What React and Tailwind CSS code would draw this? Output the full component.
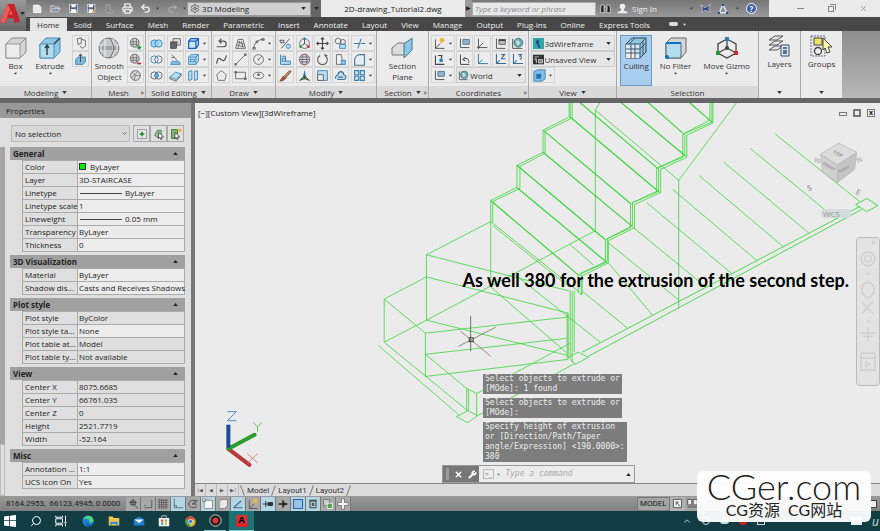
import { ChevronDown, X, Wrench, Search, Printer, Undo2, Redo2, Settings } from "lucide-react";

// 16x16 drawings for the ribbon, the toolbars and the status bar
const ICONS = {
  file: <path d="M2 3h8l3 3v8H2z" fill="#e9e9e9" stroke="#fff" />,
  open: <path d="M1 13V4h5l1 2h6v2M1 13l3-5h11l-3 5z" fill="#8b949c" stroke="#ddd" />,
  save: (
    <>
      <rect x="2" y="2" width="12" height="12" fill="#52657e" stroke="#dfe5ee" />
      <path d="M5 2h6v4H5zM4 9h8v5H4z" fill="#fff" />
    </>
  ),
  saveAs: (
    <>
      <rect x="2" y="2" width="11" height="12" fill="#52657e" stroke="#dfe5ee" />
      <path d="M4 2h6v4H4zM4 9h6v5H4z" fill="#fff" />
      <path d="M8 14l6-7 1 1-5 7z" fill="#e8a83a" />
    </>
  ),
  plotView: <path d="M3 2h6v12H3zM9 8l5 6H5" fill="#888" stroke="#aaa" />,
  polysolid: <path d="M4 2l5-1v7l-4 1zM9 3l5 1v7l-3 3-4-3" fill="#eee" stroke="#555" />,
  presspull: (
    <>
      <path d="M2 8l3-3h9v6l-3 3H2z" fill="#7cb9dd" stroke="#3a7eab" />
      <path d="M8 11V2M6 4l2-3 2 3" fill="none" stroke="#333" />
    </>
  ),
  meshMore: (
    <>
      <circle cx="7" cy="7" r="5.5" fill="#ddd" stroke="#555" />
      <path d="M2 6h10M2 9h10M5 2v10M9 2v10" fill="none" stroke="#666" />
      <path d="M10 13h5M12.5 10.500v5" stroke="#1e9e36" strokeWidth="2" />
    </>
  ),
  meshLess: (
    <>
      <circle cx="7" cy="7" r="5.500" fill="#ddd" stroke="#555" />
      <path d="M2 6h10M2 9h10M5 2v10M9 2v10" fill="none" stroke="#666" />
      <path d="M10 13h5" stroke="#cc2b2b" strokeWidth="2" />
    </>
  ),
  meshRefine: (
    <>
      <circle cx="8" cy="8" r="6" fill="#ddd" stroke="#555" />
      <path d="M4 3c1 4 5 6 10 5M3 11l8-8M6 14l2-6" fill="none" stroke="#666" />
    </>
  ),
  union: (
    <>
      <circle cx="5.500" cy="8" r="4.500" fill="#9ed0f0" stroke="#2f7cb3" />
      <circle cx="10.500" cy="8" r="4.500" fill="#9ed0f0" fillOpacity=".7" stroke="#2f7cb3" />
    </>
  ),
  subtract: (
    <>
      <circle cx="10.500" cy="8" r="4.500" fill="#eee" stroke="#555" />
      <circle cx="5.500" cy="8" r="4.500" fill="none" stroke="#2f7cb3" />
    </>
  ),
  intersect: (
    <>
      <circle cx="5.500" cy="8" r="4.500" fill="none" stroke="#555" />
      <circle cx="10.500" cy="8" r="4.500" fill="none" stroke="#555" />
      <path d="M8 4.500c3 2 3 5 0 7c-3-2-3-5 0-7z" fill="#5fb0e2" stroke="#2f7cb3" />
    </>
  ),
  slab: (
    <>
      <path d="M5 2h9v8H5z" fill="#ddd" stroke="#555" />
      <path d="M2 6h8l-1 8H2z" fill="#666" stroke="#444" />
    </>
  ),
  slice: (
    <>
      <path d="M2 14l2-4 9 1 1 3z" fill="#8cc6e8" stroke="#3a7eab" />
      <path d="M3 2l8 8M3 6l4-1" fill="none" stroke="#555" />
    </>
  ),
  thicken: (
    <>
      <path d="M1 10l7-6 7 2-6 7z" fill="#b8ddf2" stroke="#2f7cb3" />
      <path d="M1 10v2l8 3 6-7V6" fill="none" stroke="#555" />
    </>
  ),
  cubeBlue: <path d="M2 5l3-3h9v8l-3 4H2zM2 5h9v9M11 5l3-3" fill="#cfe6f8" stroke="#0f5fc0" strokeWidth="1.500" />,
  cubeLight: <path d="M2 5l3-3h9v8l-3 4H2zM2 5h9v9M11 5l3-3M4 8h5v3H4z" fill="#b8ddf2" stroke="#2f7cb3" />,
  separate: <path d="M2 3l4-1v11l-4 1zM9 3l4-1v11l-4 1z" fill="#b8ddf2" stroke="#2f7cb3" />,
  polyline: <path d="M2 12h8c5 0 5-7 0-7H6M8 2L5 5l3 3" fill="none" stroke="#555" strokeWidth="1.500" />,
  helix: <path d="M2 14L5 3h6l3 11zM4 10l8 2M5 6l7 3M5 13l2-8M11 13L9 5" fill="none" stroke="#555" />,
  arc: <path d="M2 14C3 7 7 3 14 3M1 13h3v2H1zM12 2h3v2h-3zM5 5h2v2H5z" fill="none" stroke="#555" />,
  spline: <path d="M2 13C5-4 10 20 14 3" fill="none" stroke="#555" strokeWidth="1.500" />,
  line: <path d="M2 14L14 2M1 13h2v2H1zM13 1h2v2h-2z" fill="none" stroke="#555" />,
  circle: (
    <>
      <circle cx="8" cy="8" r="6" fill="none" stroke="#555" />
      <path d="M7 8h2M8 7v2M9 7l3-3" stroke="#555" />
    </>
  ),
  polygon: <path d="M8 2l6 5-2 7H4L2 7z" fill="none" stroke="#777" strokeWidth="1.200" />,
  rect: <path d="M2 4h12v8H2zM1 3h2v2H1zM13 11h2v2h-2z" fill="none" stroke="#555" />,
  ellipse: (
    <>
      <ellipse cx="8" cy="8" rx="6.500" ry="4" fill="none" stroke="#555" />
      <circle cx="8" cy="7" r="1.500" fill="#555" />
    </>
  ),
  scaleOff: (
    <>
      <path d="M3 14L13 2M1 4h5v3H2z" fill="none" stroke="#555" strokeWidth="1.200" />
      <rect x="9" y="9" width="5" height="5" rx="2" fill="#b8ddf2" stroke="#2f7cb3" />
    </>
  ),
  align: <path d="M2 2v12h12v-4H8V4H4M4 7h4v3H4z" fill="#b8ddf2" stroke="#3a7eab" strokeWidth="1.200" />,
  brush: (
    <>
      <path d="M7 8l6-6 2 1-6 7z" fill="#c98a62" stroke="#6a4a38" />
      <path d="M1 15l4-6 4 2-4 3z" fill="#b5522f" stroke="#6a4a38" />
    </>
  ),
  gizmo: (
    <>
      <circle cx="8" cy="8" r="6" fill="none" stroke="#555" />
      <path d="M8 8V1M8 8l-5 4M8 8l5 4" stroke="#333" />
      <circle cx="3" cy="12" r="1.500" fill="#1e9e36" />
      <circle cx="13" cy="12" r="1.500" fill="#cc2b2b" />
      <circle cx="8" cy="2" r="1.500" fill="#2f7cb3" />
    </>
  ),
  globe: (
    <>
      <circle cx="8" cy="8" r="6.500" fill="#cfe0ea" stroke="#555" />
      <ellipse cx="8" cy="8" rx="3" ry="6.500" fill="none" stroke="#b44" />
      <path d="M2 8h12M3 5h10M3 11h10" stroke="#555" />
    </>
  ),
  tripod: (
    <>
      <path d="M8 1L6 10h4z" fill="#2f7cb3" />
      <path d="M8 8v4L2 14zM8 8v4l6 2z" fill="#49a05a" stroke="#444" />
    </>
  ),
  move: <path d="M8 1v14M1 8h14M6 3l2-2 2 2M6 13l2 2 2-2M3 6L1 8l2 2M13 6l2 2-2 2" fill="none" stroke="#444" strokeWidth="1.300" />,
  rotate: <path d="M11 3a6 6 0 1 1-6 0M11 3V1M11 3h3" fill="none" stroke="#555" strokeWidth="1.300" />,
  scale: (
    <>
      <path d="M2 2h12v12H2z" fill="#b8ddf2" stroke="#2f7cb3" />
      <path d="M2 7h7v7H2z" fill="#eee" stroke="#555" />
    </>
  ),
  copy: (
    <>
      <circle cx="5" cy="5" r="3.500" fill="#eee" stroke="#555" />
      <circle cx="11" cy="6" r="3" fill="none" stroke="#555" />
      <path d="M7 9h7v5H7z" fill="#b8ddf2" stroke="#2f7cb3" />
    </>
  ),
  mirror: (
    <>
      <path d="M3 2h6l2 12H3z" fill="#eee" stroke="#555" />
      <path d="M9 9h5v5H9z" fill="#8cc6e8" stroke="#2f7cb3" />
    </>
  ),
  offset: <path d="M2 12a4 4 0 0 1 3-5c0-5 7-5 7 0c4 1 3 6 0 6H4M5 10h6" fill="#b8ddf2" stroke="#45718d" strokeWidth="1.300" />,
  trim: <path d="M1 8h5M10 8h5M10 2L6 14M6 8h3" fill="none" stroke="#3a7eab" strokeWidth="1.300" />,
  fillet: <path d="M2 15V9c0-4 3-7 7-7h5v13z" fill="#e4eef4" stroke="#45718d" strokeWidth="1.300" />,
  array: <path d="M2 2h5v5H2zM9 2h5v5H9zM2 9h5v5H2zM9 9h5v5H9z" fill="#cfe6f4" stroke="#3a7eab" strokeWidth="1.300" />,
  ucs: <path d="M3 2v11h11M3 13l6-6M1 13h4M3 11v4" fill="none" stroke="#555" strokeWidth="1.200" />,
  ucsSun: (
    <>
      <path d="M3 3v11h11M3 14l6-6" fill="none" stroke="#555" strokeWidth="1.200" />
      <circle cx="11" cy="4" r="3" fill="#f0b840" />
    </>
  ),
  ucsTurn: (
    <>
      <path d="M3 3v11h11M6 3h5l-1 4" fill="none" stroke="#444" strokeWidth="1.300" />
      <rect x="8" y="7" width="4" height="4" fill="#2f7cb3" />
    </>
  ),
  ucsFace: (
    <>
      <path d="M3 2v11h11" fill="none" stroke="#555" strokeWidth="1.200" />
      <path d="M6 3h8v6H6z" fill="#8fb4cf" stroke="#45718d" />
    </>
  ),
  ucsObject: (
    <>
      <path d="M3 2v12h11" fill="none" stroke="#555" strokeWidth="1.200" />
      <path d="M6 3h8v6H6z" fill="#bbb" stroke="#555" />
      <path d="M6 4h8" stroke="#444" strokeWidth="2" />
    </>
  ),
  ucsPrev: <path d="M3 2v12h11M6 8l3-3M6 8l3 2M6 8c6-3 8 0 7 4" fill="none" stroke="#444" strokeWidth="1.200" />,
  ucsOrigin: <path d="M3 1v12h12M3 13l5-5" fill="none" stroke="#3a7eab" strokeWidth="1.200" />,
  ucsZ: <path d="M3 1v12h12M3 13l4-4M9 2h4L9 7h5" fill="none" stroke="#3a6b94" strokeWidth="1.300" />,
  ucsThree: <path d="M3 1v12h12M3 13l4-4M9 2h4L11 4q4 1 0 4" fill="none" stroke="#3a6b94" strokeWidth="1.300" />,
  world: (
    <>
      <path d="M2 2v12h12" fill="none" stroke="#555" strokeWidth="1.200" />
      <circle cx="9" cy="7" r="5.500" fill="#6ba9b4" stroke="#3d7080" />
      <path d="M6 4l4 1 1 3-3 3z" fill="#cfe6d6" />
    </>
  ),
  wireframe: (
    <>
      <rect width="16" height="16" fill="#2fa8a8" />
      <path d="M6 2l3 2-1 4 3 6H8L6 9 4 7z" fill="#23438f" />
    </>
  ),
  namedView: (
    <>
      <rect width="16" height="14" y="1" fill="#333" />
      <path d="M2 4h7M2 7h3v6M8 8h6v5H8z" stroke="#ddd" fill="#888" />
    </>
  ),
  viewCfg: (
    <>
      <path d="M1 3l5-2h9v11l-4 3H1z" fill="#7fc0ea" stroke="#44749a" />
      <path d="M4 6h6v6H4z" fill="#2a73b5" />
    </>
  ),
  quickAdd: (
    <>
      <path d="M2 2h12v12H2z" fill="#dfe9df" stroke="#888" />
      <path d="M8 5v6M5 8h6" stroke="#1a8a2a" strokeWidth="2" />
    </>
  ),
  pick: (
    <>
      <path d="M2 10l4-7h5v6l-4 4z" fill="#8fbf8f" stroke="#477147" />
      <path d="M8 6l6 6-3 0 1 3-2 0-1-3-2 2z" fill="#fff" stroke="#333" />
    </>
  ),
  quickSelect: (
    <>
      <path d="M2 2h8v12H2z" fill="#7eb56f" stroke="#37612d" />
      <path d="M7 6l6 6h-3l1 3H9l-1-3-2 2z" fill="#fff" stroke="#333" />
      <circle cx="13" cy="3" r="2.500" fill="#f0b840" />
    </>
  ),
  snapInfer: <path d="M8 1v10M3 6h10M5 4h6v5H5zM11 10l3 4" fill="none" stroke="#444" strokeWidth="1.200" />,
  snap: <path d="M13 3v10H3M3 10h2" fill="none" stroke="#666" strokeWidth="1.500" />,
  grid: <path d="M1 3h14M1 6h14M1 9h14M1 12h14M3 1v14M6 1v14M9 1v14M12 1v14" stroke="#555" />,
  ortho: <path d="M3 1v12h12M3 10h3v3" fill="none" stroke="#567b90" strokeWidth="1.300" />,
  polar: <path d="M13 5A6 5 0 1 0 13 11M7 8l7-5M7 8h6" fill="none" stroke="#444" strokeWidth="1.300" />,
  osnap: <path d="M3 3h11v11H3zM1 1h4v4H1z" fill="#f7f7f7" stroke="#777" />,
  osnap3: <path d="M3 5l3-3h8v8l-4 4H3z" fill="#e8e8e8" stroke="#777" />,
  otrack: <path d="M2 13h12M2 13l10-9" fill="none" stroke="#3a6f90" strokeWidth="1.500" />,
  dyn: <path d="M1 8h9M5 4v8M8 6h6v4H8z" fill="#334" stroke="#334" strokeWidth="1.300" />,
  lwt: <path d="M2 8h12M8 3v10M10 6v4" stroke="#222" strokeWidth="2" />,
  tpy: <path d="M2 2h12v12H2z" fill="#9ec3e6" stroke="#2f65a8" strokeWidth="1.500" />,
  qp: <path d="M4 4h8v9H4zM3 3h10M7 7h2v3H7z" fill="none" stroke="#333" strokeWidth="1.300" />,
  sc: (
    <>
      <path d="M2 2h8v8H2z" fill="#ccc" stroke="#666" />
      <path d="M7 7h7v7H7z" fill="#5da357" stroke="#fff" />
    </>
  ),
  am: <path d="M6 1h4v5h5v4h-5v5H6v-5H1V6h5z" fill="#f4f4f4" stroke="#666" />,
  layoutIc: <path d="M2 2h12v12H2zM6 6l6 6M6 6v4M6 6h4" fill="#eee" stroke="#444" strokeWidth="1.200" />,
  twoViews: <path d="M1 2h6v8H1zM9 2h6v8H9zM1 13h14" fill="#eee" stroke="#444" strokeWidth="1.200" />,
};

function Icon({ name, className = "size-3" }) {
  return (
    <svg viewBox="0 0 16 16" className={`shrink-0 ${className}`} aria-hidden="true">
      {ICONS[name]}
    </svg>
  );
}

function Caret({ className = "" }) {
  return (
    <svg viewBox="0 0 6 4" className={`h-[3px] w-[5px] shrink-0 ${className}`} fill="currentColor" aria-hidden="true">
      <path d="M0 0h6L3 4z" />
    </svg>
  );
}

function Tool({ name, menu }) {
  return (
    <button
      type="button"
      aria-label={name}
      className="flex h-[16px] items-center justify-center border border-[#d4d4d4] bg-[#ececec] px-px text-[#333]"
    >
      <Icon name={name} className="size-[13px]" />
      {menu ? <Caret className="ml-[2px] scale-75" /> : null}
    </button>
  );
}

function ToolColumn({ names, menu }) {
  return (
    <div className="flex flex-col">
      {names.map((name) => (
        <Tool key={name} name={name} menu={menu} />
      ))}
    </div>
  );
}

function Panel({ title, menu, launcher, className = "", children }) {
  return (
    <section className={`flex shrink-0 flex-col border-r border-[#aaa] ${className}`}>
      <div className="flex h-[55px] justify-evenly pt-[4px]">{children}</div>
      <h2 className="relative flex h-[12px] items-center justify-center gap-1 bg-[#d9d9d9] text-[#333]">
        {title}
        {menu ? <Caret /> : null}
        {launcher ? <span className="absolute right-px text-[7px]">»</span> : null}
      </h2>
    </section>
  );
}

function BigTool({ label, menu, active, children, className = "" }) {
  return (
    <button
      type="button"
      className={`flex h-[51px] flex-col items-center border leading-[11px] ${
        active ? "border-[#6a9cc8] bg-[#a9cdee]" : "border-transparent"
      } ${className}`}
    >
      <svg viewBox="0 0 24 24" className="size-[24px] shrink-0" aria-hidden="true">
        {children}
      </svg>
      <span className="whitespace-pre-line text-center">{label}</span>
      {menu ? <Caret className="mt-px scale-75" /> : null}
    </button>
  );
}

function RibbonSelect({ label, value, icon, className = "" }) {
  return (
    <label className={`relative flex h-[16px] items-center border border-[#ccc] bg-[#e6e6e6] pl-px ${className}`}>
      <Icon name={icon} className="size-[11px]" />
      <select aria-label={label} className="w-full appearance-none bg-transparent pl-px">
        <option>{value}</option>
      </select>
      <Caret className="absolute right-[3px]" />
    </label>
  );
}

function TitleBar() {
  return (
    <header className="flex h-[17px] items-center bg-linear-to-b from-[#777] to-[#999] text-[#222]">
      <div className="flex flex-1 items-center gap-[7px] pl-[6px] text-[#eee]">
        {["file", "open", "save", "saveAs", "plotView"].map((name) => (
          <button key={name} type="button" aria-label={name}>
            <Icon name={name} className="size-[11px]" />
          </button>
        ))}
        <button type="button" aria-label="Plot"><Printer className="size-[11px]" strokeWidth={3} /></button>
        <button type="button" aria-label="Undo" className="flex items-center gap-1">
          <Undo2 className="size-[11px]" strokeWidth={3} />
          <Caret className="scale-75 text-[#444]" />
        </button>
        <button type="button" aria-label="Redo" className="flex items-center gap-1 text-[#bbb]">
          <Redo2 className="size-[11px]" />
          <Caret className="scale-75 text-[#444]" />
        </button>
      </div>
      <label className="relative flex h-[14px] w-[124px] items-center border border-[#999] bg-[#d0d0d0] pl-[2px]">
        <Settings className="size-[11px] text-[#555]" />
        <select aria-label="Workspace" className="w-full appearance-none bg-transparent pl-[2px]">
          <option>3D Modeling</option>
        </select>
        <Caret className="absolute right-1" />
      </label>
      <button type="button" aria-label="Customize" className="flex h-[17px] w-[10px] items-center justify-center bg-[#666]">
        <Caret />
      </button>
      <h1 className="flex h-[17px] w-[144px] items-center justify-center bg-[#ebebeb]">2D-drawing_Tutorial2.dwg</h1>
      <span className="w-[7px] bg-[#999] text-center text-[6px] leading-[17px]">▶</span>
      <input
        aria-label="Search help"
        placeholder="Type a keyword or phrase"
        className="h-[14px] w-[124px] border border-[#aaa] bg-[#e8e8e8] px-[2px] italic placeholder:text-[#888]"
      />
      <div className="flex w-[173px] items-center gap-[6px] pl-1 text-[#eee]">
        <svg viewBox="0 0 16 16" className="size-[11px]" fill="#222" stroke="#eee">
          <path d="M2 3h4v11H1V7zM10 3h4l1 4v7h-5zM6 6h4v3H6z" />
        </svg>
        <button type="button" className="flex items-center gap-1">
          <svg viewBox="0 0 16 16" className="size-[11px]" fill="#eee">
            <circle cx="8" cy="5" r="4" />
            <path d="M6 8h4v3l5 2v2H1v-2l5-2z" />
          </svg>
          Sign In
        </button>
        <Caret className="ml-auto scale-75 text-[#444]" />
        <svg viewBox="0 0 16 16" className="size-[11px]">
          <path d="M1 3l6 4 8-5-3 6 3 6-7-4-6 4 2-6z" fill="#1f3b7a" stroke="#ccd6f0" />
        </svg>
        <svg viewBox="0 0 16 16" className="size-[12px]" fill="none" stroke="#dde6f8" strokeWidth="2">
          <path d="M8 2L3 13h10z" />
          <path d="M1 13h3M12 13h3M8 1v3" stroke="#2b4c92" strokeWidth="3" />
        </svg>
        <Caret className="scale-75 text-[#444]" />
        <button type="button" aria-label="Help" className="mr-3 size-[11px] rounded-full border border-white bg-[#3a5fa8] text-[8px] leading-[9px] font-bold text-white">
          ?
        </button>
      </div>
      <div className="flex h-[17px] w-[111px] items-center justify-around bg-[#ebebeb] pl-[16px] text-[#888]">
        <button type="button" aria-label="Minimize" className="h-px w-[7px] bg-[#888]" />
        <button type="button" aria-label="Restore" className="relative size-[6px] border border-[#888]">
          <span className="absolute -top-[3px] left-[1px] size-[6px] border-t border-r border-[#888]" />
        </button>
        <button type="button" aria-label="Close"><X className="size-[9px]" /></button>
      </div>
    </header>
  );
}

const TABS = [
  "Home", "Solid", "Surface", "Mesh", "Render", "Parametric", "Insert", "Annotate",
  "Layout", "View", "Manage", "Output", "Plug-ins", "Online", "Express Tools",
];

function RibbonTabs() {
  return (
    <nav className="flex h-[14px] items-end bg-[#474747] pl-[4px] text-[#eee]">
      {TABS.map((tab) => (
        <button
          key={tab}
          type="button"
          className={`h-[13px] px-[7px] leading-[13px] ${tab === "Home" ? "bg-[#e4e4e4] text-[#333]" : ""}`}
        >
          {tab}
        </button>
      ))}
      <span className="mb-[5px] ml-3 h-[4px] w-[9px] rounded-sm bg-[#ddd]" />
      <Caret className="mb-[5px] ml-1 scale-75" />
    </nav>
  );
}

function Ribbon() {
  return (
    <div className="flex h-[67px] overflow-hidden bg-linear-to-b from-[#8e8e8e] to-[#b8b8b8] text-[#333]">
      <div className="flex bg-[#ebebeb]">
        <Panel title="Modeling" menu className="w-[92px]">
          <BigTool label="Box" menu className="w-[26px]">
            <path d="M2 8l6-6h14v14l-6 6H2z" fill="#d4d4d4" stroke="#888" />
            <path d="M2 8h14v14H2z" fill="#ececec" stroke="#999" />
            <path d="M16 8l6-6" stroke="#888" />
          </BigTool>
          <BigTool label="Extrude" menu className="w-[38px]">
            <path d="M2 8l6-6h14v14l-6 6H2z" fill="#8fc6e2" stroke="#4d8fb3" />
            <path d="M2 8h14v14H2z" fill="#b4dcef" stroke="#4d8fb3" />
            <path d="M16 8l6-6M9 19v-9M7 12l2-3 2 3" fill="none" stroke="#345" strokeWidth="1.500" />
          </BigTool>
          <ToolColumn names={["polysolid", "presspull"]} />
        </Panel>
        <Panel title="Mesh" launcher className="w-[54px]">
          <BigTool label={"Smooth\nObject"} className="w-[32px]">
            <circle cx="12" cy="12" r="10" fill="#c8c8c8" stroke="#777" />
            <path d="M5 8h14v8H5z" fill="#9aa4ad" />
            <path d="M2 9h20M3 15h18M8 3v18M16 3v18" fill="none" stroke="#eee" />
            <path d="M12 2c6 5 6 15 0 20" fill="none" stroke="#666" />
          </BigTool>
          <ToolColumn names={["meshMore", "meshLess", "meshRefine"]} />
        </Panel>
        <Panel title="Solid Editing" menu className="w-[66px]">
          <ToolColumn names={["union", "subtract", "intersect"]} />
          <ToolColumn names={["slab", "slice", "thicken"]} />
          <ToolColumn names={["cubeBlue", "cubeLight", "separate"]} menu />
        </Panel>
        <Panel title="Draw" menu className="w-[64px]">
          <ToolColumn names={["polyline", "spline", "polygon"]} />
          <ToolColumn names={["helix", "line", "rect"]} />
          <ToolColumn names={["arc", "circle", "ellipse"]} menu />
        </Panel>
        <Panel title="Modify" menu className="w-[101px]">
          <ToolColumn names={["scaleOff", "align", "brush"]} />
          <ToolColumn names={["gizmo", "globe", "tripod"]} />
          <ToolColumn names={["move", "rotate", "scale"]} />
          <ToolColumn names={["copy", "mirror", "offset"]} />
          <ToolColumn names={["trim", "fillet", "array"]} menu />
        </Panel>
        <Panel title="Section" menu launcher className="w-[52px]">
          <BigTool label={"Section\nPlane"} className="w-[42px]">
            <path d="M1 12l6-5h10v9l-5 3H1z" fill="#ddd" stroke="#777" />
            <path d="M13 8l8-6v12l-8 8z" fill="#8cc6e8" stroke="#45718d" />
          </BigTool>
        </Panel>
        <Panel title="Coordinates" launcher className="w-[100px]">
          <ToolColumn names={["ucsSun", "ucsTurn", "ucsFace"]} menu />
          <div className="flex w-[70px] flex-col">
            <div className="flex justify-between">
              {["ucsFace", "ucs", "ucsObject", "world"].map((name) => <Tool key={name} name={name} />)}
            </div>
            <div className="flex justify-between">
              {["ucsPrev", "ucsOrigin", "ucsZ", "ucsThree"].map((name) => <Tool key={name} name={name} />)}
            </div>
            <RibbonSelect label="Named UCS" value="World" icon="world" />
          </div>
        </Panel>
        <Panel title="View" menu className="w-[88px]">
          <div className="flex w-[84px] flex-col">
            <RibbonSelect label="Visual style" value="3dWireframe" icon="wireframe" />
            <RibbonSelect label="Named view" value="Unsaved View" icon="namedView" />
            <div className="flex"><Tool name="viewCfg" menu /></div>
          </div>
        </Panel>
        <Panel title="Selection" className="w-[142px]">
          <BigTool label="Culling" active className="w-[32px]">
            <path d="M2 8l6-6h14v14l-6 6H2z" fill="#8fc6e2" stroke="#345" />
            <path d="M2 8h14v14z" fill="#cfe8f5" />
            <path d="M2 22V8l14 14z" fill="#eee" />
            <path d="M2 8h14v14M16 8l6-6M7 8v14M11 8v14M2 13h14M2 17h14M19 5v14M16 13l6-6M11 2L5 8" fill="none" stroke="#456" />
          </BigTool>
          <BigTool label="No Filter" menu className="w-[40px]">
            <path d="M2 7l5-5h15v14l-5 6H2z" fill="#d4d4d4" stroke="#666" />
            <path d="M2 7h15v15H2z" fill="#b4dcef" stroke="#567" />
            <path d="M2 7h15" stroke="#0f6fc0" strokeWidth="2" />
            <circle cx="3" cy="21" r="2" fill="#0f6fc0" />
          </BigTool>
          <BigTool label="Move Gizmo" menu className="w-[56px]">
            <path d="M12 3l9 5v9l-9 5-9-5V8zM12 3v9M12 12l9 5M12 12l-9 5" fill="none" stroke="#444" strokeWidth="1.300" />
            <rect x="10" y="1" width="4" height="4" fill="#2f7cb3" />
            <rect x="1" y="15" width="4" height="4" fill="#1e9e36" />
            <rect x="19" y="15" width="4" height="4" fill="#cc2b2b" />
            <circle cx="12" cy="12" r="2" fill="#444" />
          </BigTool>
        </Panel>
        <section className="flex w-[42px] flex-col items-center justify-between border-r border-[#aaa] pt-[2px] pb-[4px]">
          <BigTool label="Layers">
            <path d="M2 6l6-4h8l-6 4zM2 11l6-4h8l-6 4zM2 16l6-4h8l-6 4z" fill="#e8e8e8" stroke="#555" />
            <path d="M14 11h8v11h-8z" fill="#dfe8f2" stroke="#334d70" />
            <path d="M16 14h4M16 17h4M16 19h4" stroke="#334d70" strokeWidth="1.500" />
          </BigTool>
          <Caret />
        </section>
        <section className="flex w-[41px] flex-col items-center justify-between pt-[2px] pb-[4px]">
          <BigTool label="Groups">
            <rect x="2" y="2" width="14" height="20" fill="none" stroke="#668" strokeDasharray="2 1" />
            <rect x="5" y="4" width="8" height="7" fill="#f0e060" stroke="#444" />
            <circle cx="9" cy="17" r="3.500" fill="none" stroke="#444" strokeWidth="1.300" />
            <path d="M14 4l9 9h-4l2 5-3 1-2-5-2 2z" fill="#fff6b0" stroke="#444" />
          </BigTool>
          <Caret />
        </section>
      </div>
    </div>
  );
}

const GROUPS = [
  {
    title: "General",
    rows: [
      ["Color", "ByLayer", "swatch"],
      ["Layer", "3D-STAIRCASE"],
      ["Linetype", "ByLayer", "line"],
      ["Linetype scale", "1"],
      ["Lineweight", "0.05 mm", "line"],
      ["Transparency", "ByLayer"],
      ["Thickness", "0"],
    ],
  },
  {
    title: "3D Visualization",
    rows: [["Material", "ByLayer"], ["Shadow dis...", "Casts and Receives Shadows"]],
  },
  {
    title: "Plot style",
    rows: [
      ["Plot style", "ByColor", "locked"],
      ["Plot style ta...", "None"],
      ["Plot table at...", "Model", "locked"],
      ["Plot table ty...", "Not available", "locked"],
    ],
  },
  {
    title: "View",
    rows: [
      ["Center X", "8075.6685", "locked"],
      ["Center Y", "66761.035", "locked"],
      ["Center Z", "0", "locked"],
      ["Height", "2521.7719", "locked"],
      ["Width", "-52.164", "locked"],
    ],
  },
  { title: "Misc", rows: [["Annotation ...", "1:1"], ["UCS icon On", "Yes"]] },
];

function PropertyGroup({ title, rows }) {
  return (
    <section className="pb-[3px]">
      <h3 className="flex h-[13px] items-center justify-between bg-[#a0a0a0] px-[3px] font-bold text-[#222]">
        {title}
        <Caret className="mr-1 rotate-180" />
      </h3>
      <div className="pl-[12px]">
        <table className="w-full table-fixed border-collapse">
          <tbody>
            {rows.map(([name, value, kind]) => (
              <tr key={name} className="h-[13px] leading-[12px]">
                <th scope="row" className="w-[55px] border border-[#aaa] p-0 pl-[2px] text-left font-normal whitespace-nowrap">
                  {name}
                </th>
                <td className={`border border-[#aaa] p-0 pl-px whitespace-nowrap ${kind === "locked" ? "" : "bg-[#ececec]"}`}>
                  {kind === "swatch" ? <span className="mr-[4px] inline-block size-[7px] border border-[#333] bg-[#0e0]" /> : null}
                  {kind === "line" ? <span className="mr-[3px] ml-px inline-block h-px w-[42px] bg-[#444] align-middle" /> : null}
                  {value}
                </td>
              </tr>
            ))}
          </tbody>
        </table>
      </div>
    </section>
  );
}

function Properties() {
  return (
    <aside className="flex w-[195px] shrink-0 flex-col border-r-4 border-[#777] bg-[#dfdfdf] text-[#222]">
      <h2 className="flex h-[15px] items-center bg-[#999] pl-[6px]">Properties</h2>
      <div className="flex items-center gap-[3px] pt-[7px] pr-[7px] pl-[11px]">
        <label className="relative flex h-[17px] flex-1 items-center border border-[#bbb] bg-[#d8d8d8]">
          <select aria-label="Selection" className="w-full appearance-none bg-transparent pl-[3px]">
            <option>No selection</option>
          </select>
          <ChevronDown className="absolute right-px size-[7px]" />
        </label>
        <div className="flex">
          {["quickAdd", "pick", "quickSelect"].map((name) => (
            <button key={name} type="button" aria-label={name} className="flex size-[17px] items-center justify-center border border-[#aaa]">
              <Icon name={name} className="size-[12px]" />
            </button>
          ))}
        </div>
      </div>
      <div className="flex flex-1 pt-[5px]">
        <div className="mr-[5px] flex w-[5px] flex-col">
          <div className="flex-6 bg-[#a5a5a5]" />
          <div className="flex-1 border border-[#bbb]" />
        </div>
        <div className="min-w-0 flex-1 pr-[6px]">
          {GROUPS.map((group) => (
            <PropertyGroup key={group.title} {...group} />
          ))}
        </div>
      </div>
    </aside>
  );
}

const TREADS =
  "M543 131L630 204M543 153L632 227M517 166L605 240M517 188L607 263M491 201L578 275M570 118L659 193M579 103L657 169M620 103L685 157M647 103L682 134M688 103L711 123";

const EDGES =
  "M569 103V118L543 131V153L517 166V188L491 201V222M572 103V119L545 132V154L520 167V189L493 202V223M570 103V119" +
  "M711 103V123L682 135V158L656 169V193L630 204V228L605 240V263L578 275V293" +
  "M709 103V121L684 134V156L658 168V191L632 203V226L607 239V261L581 273V295" +
  "M712 103V124L686 136V158L660 170V193L634 205V228L608 241V263L582 276V294H579";

const OUTLINES =
  "M600 103L595 111V231M595 111L678 181V308M678 181L736 103M595 231L427 320L385 342V299L427 277M427 320V255L491 222V287L567 353" +
  "M427 255L569 291M427 277L568 313M427 320L567 355M385 299L426 333V376L568 359M426 333L567 317M426 354L567 338M426 354L467 388V411" +
  "M469 389V410M467 388L477 393V415M477 393L570 343M478 415L575 363M385 342L468 410M379 345L459 414M468 410L478 415L468 422L457 416L468 410" +
  "M491 222L579 292M493 226L569 287M567 313V358M568 313V358M570 290V358M572 291V362M574 291V352M568 357L578 352L588 357L575 364Z";

const RAIL = "M582 352L858 207M588 356L860 210M854 205L865 199L876 206L865 212Z";

const HATCH =
  "M774 135L858 202M749 149L834 219M723 163L807 233M698 176L782 247M672 190L756 261M646 203L730 273M633 228L705 287M608 243L678 300" +
  "M608 263L652 315M583 292L627 328M569 244L593 265M513 273L600 342";

function Drawing() {
  return (
    <svg viewBox="195 104 685 378" preserveAspectRatio="xMidYMid slice" className="absolute inset-0 size-full" aria-hidden="true">
      <g fill="none" stroke="#3ad63a">
        <path d={OUTLINES} strokeWidth=".8" />
        <path d={HATCH} strokeWidth=".8" />
        <path d={RAIL} strokeWidth=".9" />
        <path d={EDGES} strokeWidth=".8" />
        <path d={TREADS} strokeWidth="1.200" />
      </g>
      <g fill="none" stroke="#555" strokeWidth=".8">
        <path d="M471 316V351" />
        <path d="M459 346L496 327" stroke="#6a7a6a" />
        <path d="M461 331L491 356" stroke="#886a6a" />
        <rect x="469.500" y="337.500" width="4" height="4" stroke="#222" />
      </g>
      <g strokeWidth="4" strokeLinecap="round">
        <path d="M230 448L251 464" stroke="#b83a3e" />
        <path d="M230 448L256 434" stroke="#2b9a30" />
        <path d="M230 447V424" stroke="#1b4a96" strokeLinecap="butt" />
      </g>
      <g fill="none" strokeWidth=".9">
        <path d="M229 411h9l-9 9h9" stroke="#3f83c4" />
        <path d="M255 422l4 4 4-4M259 426v5" stroke="#57bd57" />
        <path d="M249 453l10 9M259 453l-10 9" stroke="#d37a84" />
      </g>
      <g stroke="#b5b5b5" strokeWidth=".7">
        <path d="M819 155L837 144L855 153L836 166Z" fill="#dcdcdc" />
        <path d="M819 155L836 166V183L821 173Z" fill="#cfcfcf" />
        <path d="M836 166L855 153L853 170L836 183Z" fill="#c4c4c4" />
      </g>
      <g fontFamily="Open Sans" fontWeight="700" fill="#999">
        <text x="831" y="154" fontSize="5" transform="rotate(25 831 154)">TOP</text>
        <text x="821" y="165" fontSize="4" transform="rotate(30 821 165)">FRONT</text>
        <text x="838" y="174" fontSize="4" transform="rotate(-30 838 174)">RIGHT</text>
        <text x="807" y="192" fontSize="8" fill="#aaa" transform="rotate(-25 807 192)">S</text>
        <text x="853" y="194" fontSize="8" fill="#aaa" transform="rotate(30 853 194)">E</text>
        <text x="812" y="162" fontSize="7" fill="#bbb" transform="rotate(25 812 162)">W</text>
        <text x="856" y="164" fontSize="7" fill="#bbb" transform="rotate(-25 856 164)">N</text>
      </g>
    </svg>
  );
}

const HISTORY = [
  "Select objects to extrude or\n[MOde]: 1 found",
  "Select objects to extrude or\n[MOde]:",
  "Specify height of extrusion\nor [Direction/Path/Taper\nangle/Expression] <190.0000>:\n380",
];

function CommandLine() {
  return (
    <div className="absolute bottom-0 left-[247px] w-[193px] font-['DejaVu_Sans_Mono',monospace] text-[8px] leading-[10px]">
      <div className="flex flex-col items-start gap-[4px] pb-[3px] pl-[41px]">
        {HISTORY.map((text) => (
          <p key={text} className="bg-[#777]/95 px-[2px] whitespace-pre text-[#eee]">{text}</p>
        ))}
      </div>
      <form className="flex h-[18px] items-center border border-[#999] bg-[#ececec]">
        <div className="flex h-full w-[36px] items-center justify-around bg-[#777] text-white">
          <span className="h-3 w-[3px] bg-[#999]" />
          <button type="button" aria-label="Close"><X className="size-[9px]" strokeWidth={4} /></button>
          <button type="button" aria-label="Customize"><Wrench className="size-[9px]" fill="white" /></button>
        </div>
        <span className="ml-1 border border-[#bbb] px-px text-[6px] leading-[8px] text-[#777]">&gt;_</span>
        <Caret className="ml-[2px] scale-75 text-[#777]" />
        <input aria-label="Command" placeholder="Type a command" className="min-w-0 flex-1 px-1 italic placeholder:text-[#aaa]" />
        <Caret className="mr-[3px] rotate-180" />
      </form>
    </div>
  );
}

function NavBar() {
  return (
    <div className="absolute top-[134px] right-0 flex h-[149px] w-[24px] justify-center rounded-sm border border-[#bbb] bg-[#e3e3e3]">
      <svg viewBox="0 0 20 148" className="h-full w-[20px]" fill="none" stroke="#d0d0d0" strokeWidth="1.500" aria-hidden="true">
        <path d="M14 3l3 3M17 3l-3 3" />
        <circle cx="10" cy="21" r="7" />
        <rect x="7" y="18" width="6" height="6" rx="2" />
        <path d="M8 36h4" />
        <path d="M4 48l4-3h5l3 4v6l-4 5H8l-4-5z" />
        <path d="M3 64l13 13M15 64L4 76" />
        <path d="M9 84h3" />
        <path d="M2 96h16M10 90v14M5 99h10" />
        <path d="M3 116h14v17H3zM3 121h14M8 125l4 2-4 3z" />
      </svg>
    </div>
  );
}

function Canvas() {
  return (
    <main className="relative flex-1 overflow-hidden bg-[#ebebeb] text-[#222]">
      <Drawing />
      <p className="absolute top-[4px] left-[3px]">[−][Custom View][3dWireframe]</p>
      <div className="absolute top-[6px] right-[5px] flex gap-[6px]">
        <span className="mt-[3px] h-[4px] w-[8px] border border-[#777]" />
        <span className="size-[8px] border-2 border-double border-[#777]" />
        <span className="size-[8px] border border-[#777] text-center text-[7px] leading-[6px] font-bold">x</span>
      </div>
      <button type="button" className="absolute top-[106px] right-[29px] w-[30px] rounded-sm bg-[#d5dade] pl-[2px] text-left text-[8px] leading-[9px] text-[#999]">
        WCS
      </button>
      <NavBar />
      <p className="absolute top-[166px] right-[31px] font-['Lato',sans-serif] text-[18px] leading-[22px] font-bold whitespace-nowrap text-black">
        As well 380 for the extrusion of the second step.
      </p>
      <CommandLine />
    </main>
  );
}

function LayoutTabs() {
  return (
    <div className="flex h-[13px] items-stretch border-t border-[#888] bg-[#dcdcdc] font-['Roboto',sans-serif] text-[#333]">
      {["|◀", "◀", "▶", "▶|"].map((glyph) => (
        <button key={glyph} type="button" className="w-[11px] border-r border-[#bbb] text-[5px] text-[#555]">{glyph}</button>
      ))}
      {["Model", "Layout1", "Layout2"].map((tab) => (
        <button key={tab} type="button" className="flex items-center">
          {tab === "Model" ? <span className="mx-[3px] h-[11px] w-px -rotate-20 bg-[#777]" /> : null}
          <span className="px-[1px]">{tab}</span>
          <span className="mx-[3px] h-[11px] w-px rotate-20 bg-[#777]" />
        </button>
      ))}
    </div>
  );
}

const TOGGLES = [
  ["snapInfer"], ["snap"], ["grid"], ["ortho", true], ["polar"], ["osnap", true], ["osnap3"], ["otrack", true],
  ["ucsSun"], ["dyn", true], ["lwt"], ["tpy", true], ["qp", true], ["sc"], ["am"],
];

function StatusBar() {
  return (
    <div className="flex h-[15px] items-center bg-linear-to-b from-[#9a9a9a] to-[#808080] font-['Roboto',sans-serif] text-[#222]">
      <output className="w-[126px] pl-[6px]">8164.2953,&nbsp; 66123.4945, 0.0000</output>
      {TOGGLES.map(([name, on]) => (
        <button
          key={name}
          type="button"
          aria-label={name}
          aria-pressed={Boolean(on)}
          className={`flex h-[14px] w-[15px] items-center justify-center border-r border-[#777] ${on ? "bg-[#b4d6e4]" : "bg-[#a8a8a8]"}`}
        >
          <Icon name={name} className="size-[12px]" />
        </button>
      ))}
      <div className="ml-auto flex w-[243px] items-center">
        <button type="button" className="h-[14px] border border-[#777] bg-[#a4a4a4] px-[2px] leading-[12px]">MODEL</button>
        <span className="flex h-[14px] w-[15px] items-center justify-center bg-[#b4b4b4]"><Icon name="layoutIc" className="size-[11px]" /></span>
        <span className="flex h-[14px] w-[15px] items-center justify-center bg-[#a4a4a4]"><Icon name="twoViews" className="size-[11px]" /></span>
        <span className="mr-[3px] ml-auto h-[8px] w-[9px] border border-[#444] bg-[#eee]" />
      </div>
    </div>
  );
}

function TaskBar() {
  return (
    <footer className="flex h-[20px] items-center bg-[#123e43] text-white">
      {/* pinned programs */}
      <div className="flex items-center">
        <button type="button" aria-label="Start" className="flex w-[20px] justify-center">
          <svg viewBox="0 0 16 16" className="size-[12px]" fill="#fff"><path d="M0 2l7-1v6H0zM8 1l8-1v7H8zM0 8h7v7l-7-1zM8 8h8v8l-8-1z" /></svg>
        </button>
        <button type="button" aria-label="Search" className="ml-[4px] flex w-[24px] justify-center">
          <Search className="size-[12px] -scale-x-100" />
        </button>
        <button type="button" aria-label="Task view" className="flex w-[26px] justify-center">
          <svg viewBox="0 0 16 16" className="size-[12px]" fill="none" stroke="#fff" strokeWidth="1.300"><path d="M1 1v2h9V1M1 5h9v6H1zM1 15v-2h9v2M14 1v8M14 12v3" /><circle cx="14" cy="10" r="1" /></svg>
        </button>
        <button type="button" aria-label="Edge" className="flex w-[27px] justify-center">
          <svg viewBox="0 0 16 16" className="size-[12px]">
            <circle cx="8" cy="8" r="7.500" fill="#1c80d0" />
            <path d="M1 6c3-7 14-7 14.500 2c0 3-5 3-6 1c1-4-4-5-8.500-3z" fill="#4fcf80" />
            <path d="M6 8c-1 4 3 6 7 5-4 4-9 1-7-5z" fill="#0f4f9a" />
          </svg>
        </button>
        <button type="button" aria-label="Explorer" className="flex w-[25px] justify-center">
          <svg viewBox="0 0 16 16" className="size-[12px]"><path d="M1 2h5l2 2h7v10H1z" fill="#f3c64c" /><path d="M3 9h10v5h-2v-2H5v2H3z" fill="#3b8ed0" /></svg>
        </button>
        <button type="button" aria-label="Mail" className="flex w-[25px] justify-center">
          <svg viewBox="0 0 16 16" className="size-[12px]"><path d="M1 6l7-4 7 4v8H1z" fill="#1f7fd0" /><path d="M2 6h12l-6 5z" fill="#fff" /></svg>
        </button>
        <button type="button" aria-label="Store" className="flex w-[26px] justify-center">
          <svg viewBox="0 0 16 16" className="size-[12px]"><path d="M5 4V1h6v3" fill="none" stroke="#ddd" /><path d="M1 4h14v11H1z" fill="#f2f2f2" /><path d="M4 6h3v3H4z" fill="#e5532d" /><path d="M9 6h3v3H9z" fill="#7db83a" /><path d="M4 10h3v3H4z" fill="#2a9fe0" /><path d="M9 10h3v3H9z" fill="#f0b52c" /></svg>
        </button>
        <button type="button" aria-label="Chrome" className="flex w-[27px] justify-center">
          <svg viewBox="0 0 16 16" className="size-[11px]"><circle cx="8" cy="8" r="7.500" fill="#e3b52c" /><path d="M1.500 4A7.500 7.500 0 0 1 15 5H8L5 9z" fill="#d8473a" /><path d="M1.500 4L6 11l2 4.500A7.500 7.500 0 0 1 1.500 4z" fill="#3b9c55" /><circle cx="8" cy="8" r="3.300" fill="#4285e0" stroke="#fff" /></svg>
        </button>
        <button type="button" aria-label="Recorder" className="flex h-[20px] w-[22px] items-center justify-center border-b border-[#8cc]">
          <svg viewBox="0 0 16 16" className="size-[13px]"><circle cx="8" cy="8" r="7" fill="#222" stroke="#eee" /><circle cx="8" cy="8" r="3.500" fill="#e2323a" /></svg>
        </button>
        <button type="button" aria-label="AutoCAD" className="ml-[3px] flex h-[20px] w-[25px] items-center justify-center border-b border-[#8cc] bg-[#1b7377]">
          <span className="size-[12px] border-b-3 border-[#d22] bg-[#c33] text-center text-[9px] leading-[10px] font-bold text-black">A</span>
        </button>
      </div>
      <div className="ml-auto flex w-[198px] items-center gap-[10px] text-[#cdd]">
        <ChevronDown className="size-[10px] rotate-180" />
        <span className="size-[8px] rounded-full border border-[#cdd]" />
        <span className="h-[6px] w-[9px] rounded-full bg-[#cdd]" />
        <span className="size-[8px] rounded-full bg-[#c22]" />
        <span className="size-[8px] border border-[#cdd]" />
        <span className="ml-auto h-[8px] w-[11px] bg-[#eee]" />
        <span className="pr-px text-[12px] italic">u</span>
      </div>
    </footer>
  );
}

function Watermark() {
  return (
    <div className="absolute right-[9px] bottom-[9px] flex h-[51px] w-[174px] flex-col items-center rounded-md bg-white/95 font-['Lato','Noto_Sans_CJK_SC',sans-serif] text-[#222]">
      <span className="text-[36px] leading-[30px] font-light">CGer.com</span>
      <span className="text-[16px] leading-[18px]">CG资源&nbsp; CG网站</span>
    </div>
  );
}

export default function App() {
  return (
    <div className="relative flex min-h-screen flex-col bg-[#666] font-['Open_Sans',sans-serif] text-[8px] leading-[11px]">
      <div className="flex">
        <button type="button" aria-label="Application menu" className="flex w-[26px] shrink-0 items-center bg-linear-to-b from-[#999] to-[#666] pb-[4px]">
          <svg viewBox="0 0 24 26" className="h-[24px] w-[20px]" aria-hidden="true">
            <path d="M0 23L9 1h8l7 20-6 3-2-6H9l-3 6z" fill="#c8232b" />
            <path d="M9 1l3 6-6 17-6-1zM11 14l2-6 2 6z" fill="#ee5a5a" />
          </svg>
          <Caret className="text-[#222]" />
        </button>
        <div className="min-w-0 flex-1">
          <TitleBar />
          <RibbonTabs />
        </div>
      </div>
      <Ribbon />
      <div className="mt-[5px] flex flex-1">
        <Properties />
        <div className="flex min-w-0 flex-1 flex-col">
          <Canvas />
          <LayoutTabs />
        </div>
      </div>
      <StatusBar />
      <TaskBar />
      <Watermark />
    </div>
  );
}
